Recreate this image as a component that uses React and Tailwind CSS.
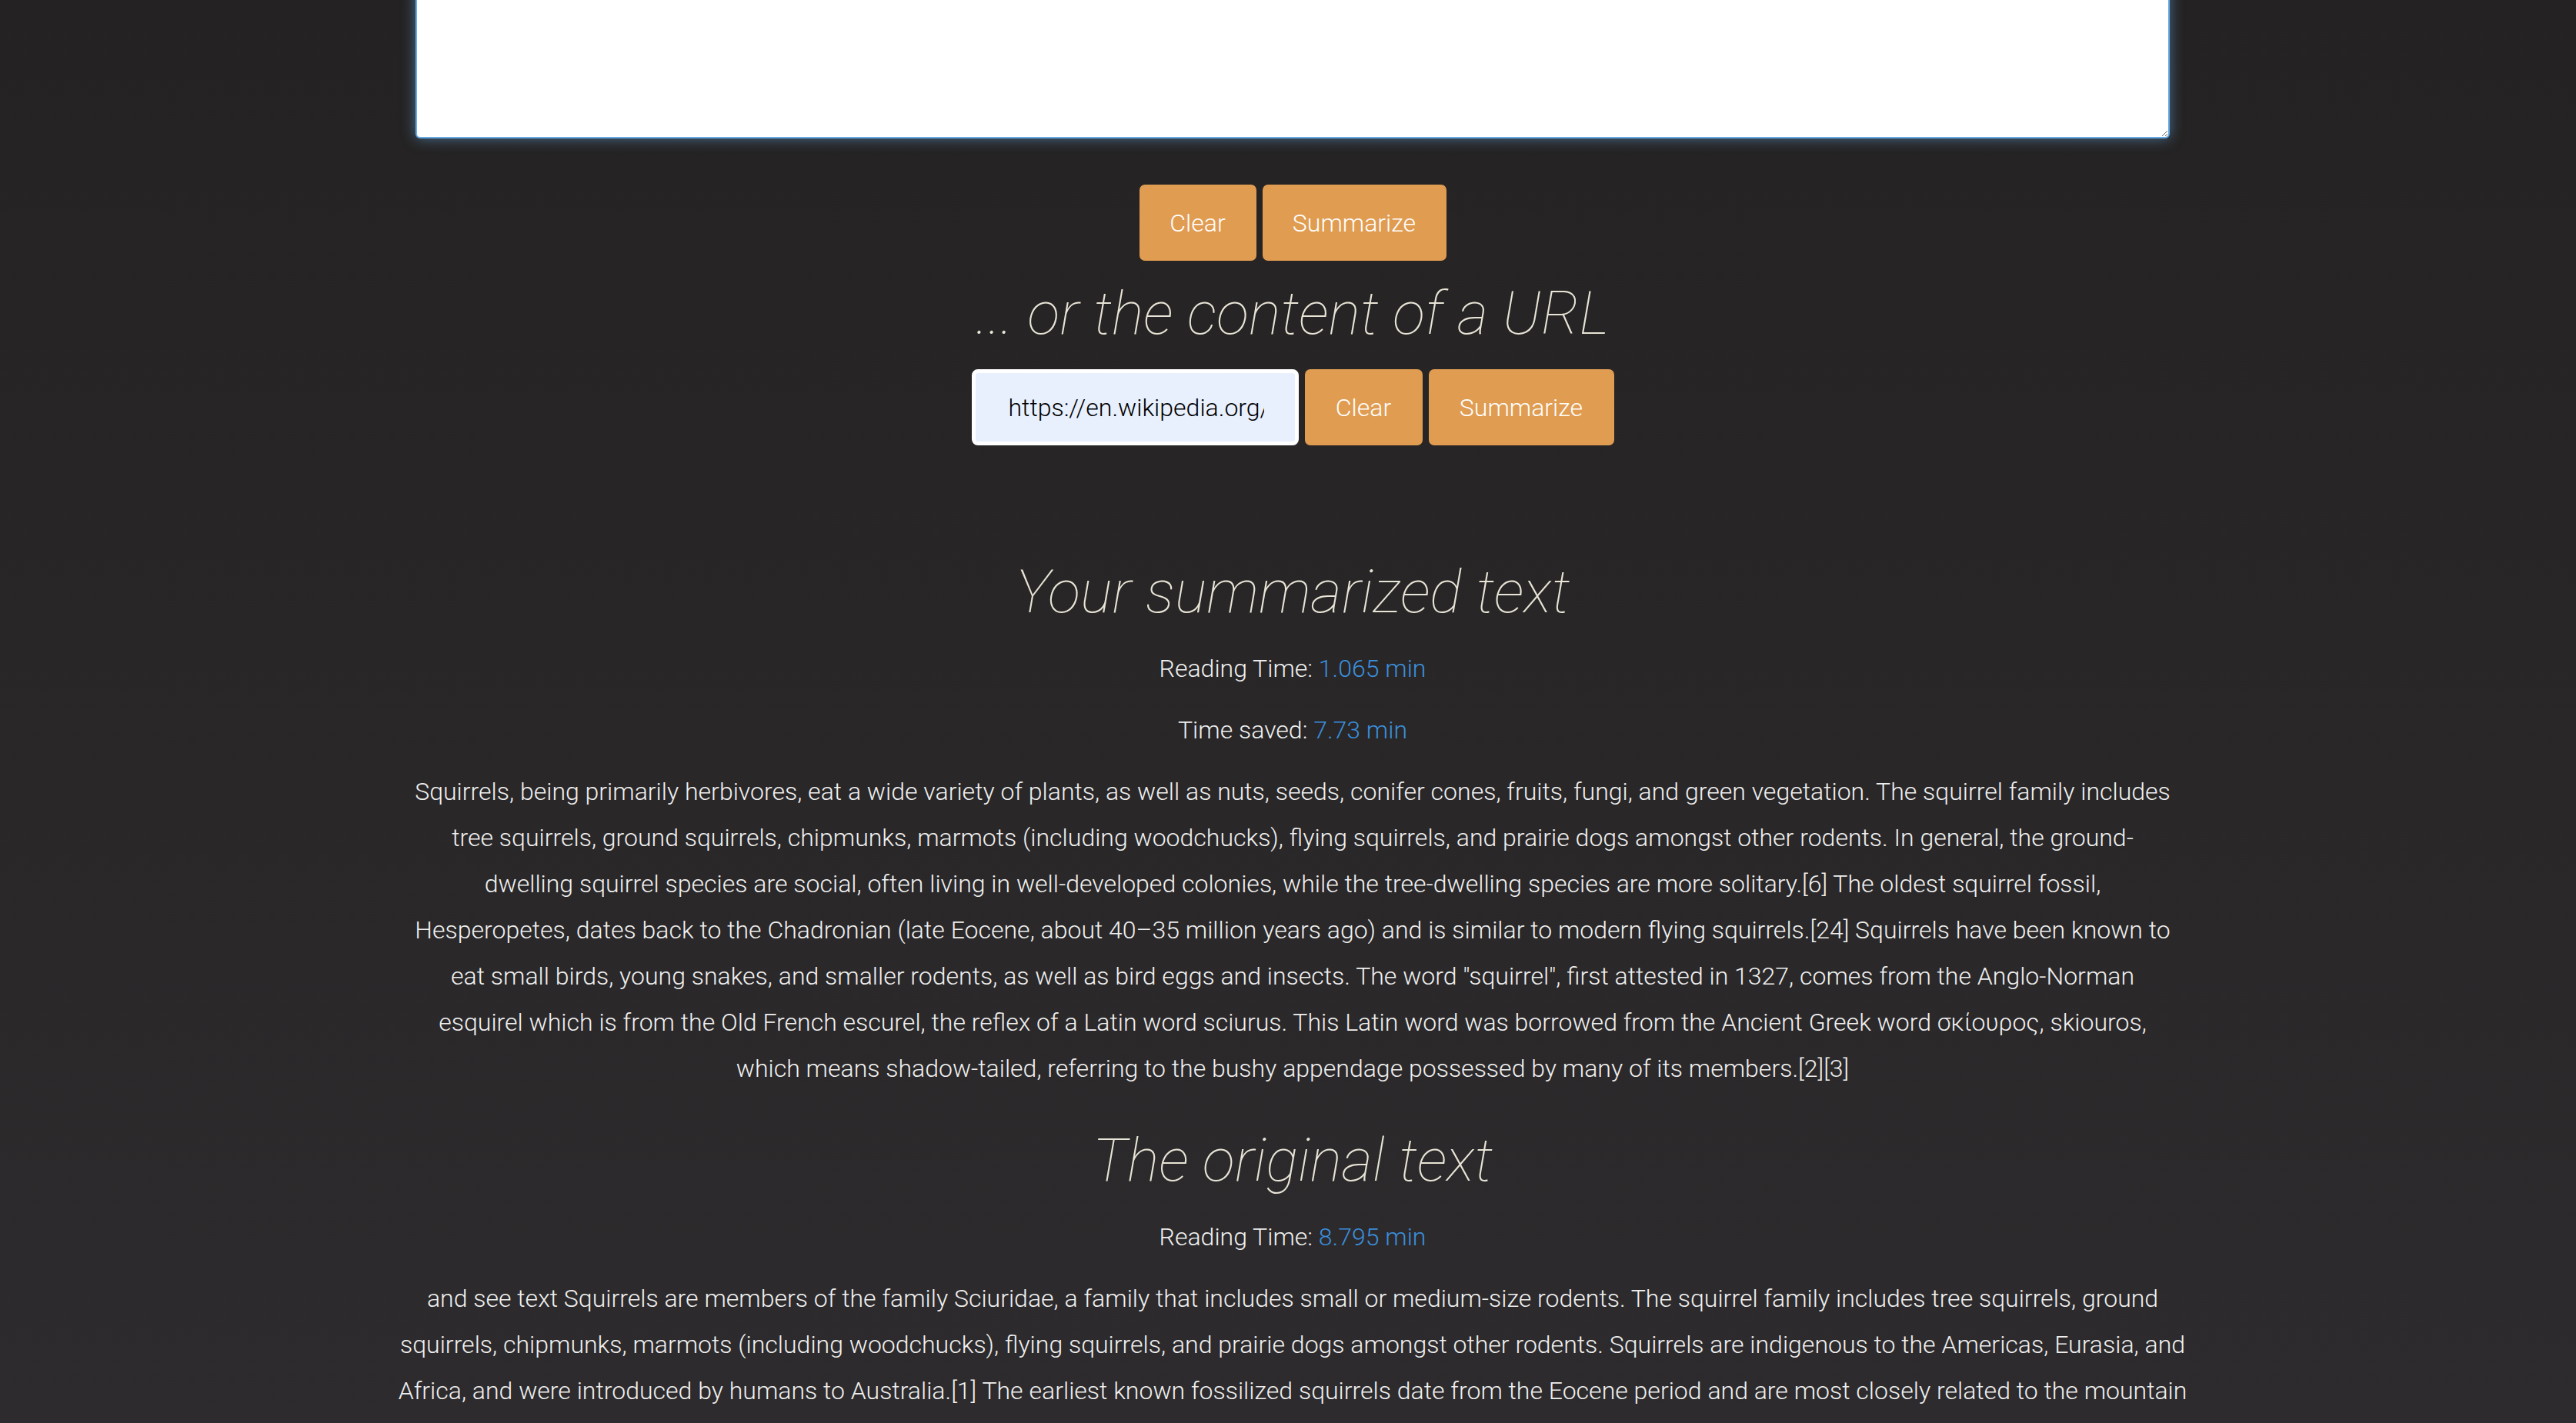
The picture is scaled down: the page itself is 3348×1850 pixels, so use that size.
import React from 'react';

const summary =
  'Squirrels, being primarily herbivores, eat a wide variety of plants, as well as nuts, seeds, conifer cones, fruits, fungi, and green vegetation. The squirrel family includes tree squirrels, ground squirrels, chipmunks, marmots (including woodchucks), flying squirrels, and prairie dogs amongst other rodents. In general, the ground-dwelling squirrel species are social, often living in well-developed colonies, while the tree-dwelling species are more solitary.[6] The oldest squirrel fossil, Hesperopetes, dates back to the Chadronian (late Eocene, about 40–35 million years ago) and is similar to modern flying squirrels.[24] Squirrels have been known to eat small birds, young snakes, and smaller rodents, as well as bird eggs and insects. The word "squirrel", first attested in 1327, comes from the Anglo-Norman esquirel which is from the Old French escurel, the reflex of a Latin word sciurus. This Latin word was borrowed from the Ancient Greek word σκίουρος, skiouros, which means shadow-tailed, referring to the bushy appendage possessed by many of its members.[2][3]';

const original =
  'and see text Squirrels are members of the family Sciuridae, a family that includes small or medium-size rodents. The squirrel family includes tree squirrels, ground squirrels, chipmunks, marmots (including woodchucks), flying squirrels, and prairie dogs amongst other rodents. Squirrels are indigenous to the Americas, Eurasia, and Africa, and were introduced by humans to Australia.[1] The earliest known fossilized squirrels date from the Eocene period and are most closely related to the mountain beaver and to the dormouse, among living families. Squirrels are generally small animals, ranging in size from the African pygmy squirrel and least pygmy squirrel to the Bhutan giant flying squirrel.';

function OrangeButton({ children, className = '' }) {
  return (
    <button
      className={`h-[99px] rounded-[7px] bg-[#e09c51] text-[32px] font-light text-white ${className}`}
    >
      {children}
    </button>
  );
}

function Heading({ children, className = '' }) {
  return (
    <h2 className={`text-[78px] leading-none font-thin italic text-[#e8e4d6] ${className}`}>
      {children}
    </h2>
  );
}

function Stat({ label, value }) {
  return (
    <p className="mb-[20px] text-[32px] leading-[60px] font-light text-[#efefef]">
      {label} <span className="text-[#3b8fdc]">{value}</span>
    </p>
  );
}

export default function App() {
  return (
    <div className="h-[1850px] overflow-hidden bg-gradient-to-b from-[#242222] to-[#2d2b2d] pl-[12px] font-['Roboto','Liberation_Sans',sans-serif]">
      <div className="mx-auto flex w-[2400px] flex-col items-center">
        {/* input area */}
        <textarea
          className="-mt-[40px] h-[220px] w-[2280px] rounded-[6px] border-2 border-[#66a9e3] bg-white shadow-[0_0_18px_rgba(102,175,233,0.55)] outline-none"
          defaultValue=""
        />

        <div className="mt-[60px] flex gap-[8px]">
          <OrangeButton className="w-[152px]">Clear</OrangeButton>
          <OrangeButton className="w-[239px]">Summarize</OrangeButton>
        </div>

        <Heading className="mt-[30px]">... or the content of a URL</Heading>

        <div className="mt-[33px] flex gap-[8px]">
          <input
            className="h-[99px] w-[425px] rounded-[8px] border-[5px] border-white bg-[#e8f0fe] pl-[43px] pr-[40px] text-[32px] font-light text-black outline-none"
            defaultValue="https://en.wikipedia.org/wiki/Squirrel"
          />
          <OrangeButton className="w-[153px]">Clear</OrangeButton>
          <OrangeButton className="w-[241px]">Summarize</OrangeButton>
        </div>

        {/* summary */}
        <Heading className="mt-[152px]">Your summarized text</Heading>
        <div className="mt-[30px] flex flex-col items-center">
          <Stat label="Reading Time:" value="1.065 min" />
          <Stat label="Time saved:" value="7.73 min" />
        </div>
        <p className="mb-[20px] w-[2292px] text-center text-[32px] leading-[60px] font-light text-[#efefef]">
          {summary}
        </p>

        {/* original */}
        <Heading className="mt-[31px]">The original text</Heading>
        <div className="mt-[30px]">
          <Stat label="Reading Time:" value="8.795 min" />
        </div>
        <p className="w-[2340px] text-center text-[32px] leading-[60px] font-light text-[#efefef]">
          {original}
        </p>
      </div>
    </div>
  );
}
